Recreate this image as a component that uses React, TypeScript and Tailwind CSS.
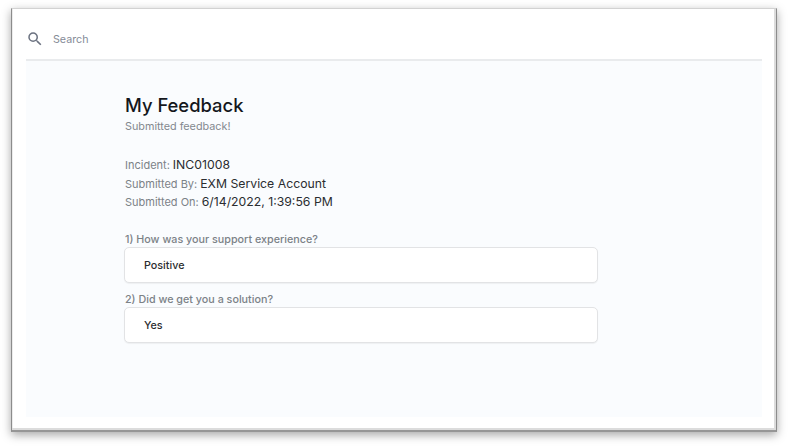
import { MdSearch } from 'react-icons/md'

const DETAILS = [
  { label: 'Incident:', value: 'INC01008' },
  { label: 'Submitted By:', value: 'EXM Service Account' },
  { label: 'Submitted On:', value: '6/14/2022, 1:39:56 PM' },
]

const ANSWERS = [
  { question: '1) How was your support experience?', answer: 'Positive' },
  { question: '2) Did we get you a solution?', answer: 'Yes' },
]

function SearchBar() {
  return (
    <div className="flex h-[52px] items-center gap-[9px] border-b-2 border-[#e9ebed] pt-[9px]">
      <MdSearch size={18} className="text-[#6b7280]" />
      <span className="pt-[3px] text-[10.7px] text-[#858b97]">Search</span>
    </div>
  )
}

function Answer({ question, answer }: { question: string; answer: string }) {
  return (
    <div className="h-[60px]">
      <p className="h-[15px] pl-px text-[10.75px] font-medium leading-[15px] text-[#7c8287]">{question}</p>
      <div className="flex h-9 items-center rounded-[5px] border border-[#e2e3e5] bg-white px-[19px] pt-[3px] text-[10.75px] font-medium leading-4 text-[#2b2d30] shadow-[0_1px_1px_rgba(0,0,0,0.05)]">
        {answer}
      </div>
    </div>
  )
}

export default function App() {
  return (
    <div className="h-[446px] w-[788px] overflow-hidden bg-white pl-[11px] pt-2 font-['Inter',sans-serif]">
      <div className="h-[424px] w-[766px] border-b-2 border-l border-r border-t border-b-[#969696] border-l-[#8c8c8c] border-r-[#8c8c8c] border-t-[#d2d2d2] bg-white px-[14px] shadow-[0_3px_9px_rgba(0,0,0,0.35),inset_-2px_-2px_0_#dcdcdc,inset_1px_0_0_#ececec]">
        <SearchBar />
        <main className="h-[356px] w-[736px] bg-[#fafcfe] pl-[98px] pt-8">
          <h1 className="pl-px text-[18.4px] font-medium leading-6 text-[#14171c]">My Feedback</h1>
          <p className="pl-px pt-[2px] text-[10.8px] leading-4 text-[#83888e]">Submitted feedback!</p>

          <div className="mt-[21px] pl-px">
            {DETAILS.map((item) => (
              <p key={item.label} className="flex h-[18.5px] items-baseline gap-[3px] leading-[18px]">
                <span className="text-[11px] text-[#7c8287]">{item.label}</span>
                <span className="text-[12.25px] text-[#2b2d30]">{item.value}</span>
              </p>
            ))}
          </div>

          <div className="mt-5 w-[474px]">
            {ANSWERS.map((item) => (
              <Answer key={item.question} {...item} />
            ))}
          </div>
        </main>
      </div>
    </div>
  )
}
